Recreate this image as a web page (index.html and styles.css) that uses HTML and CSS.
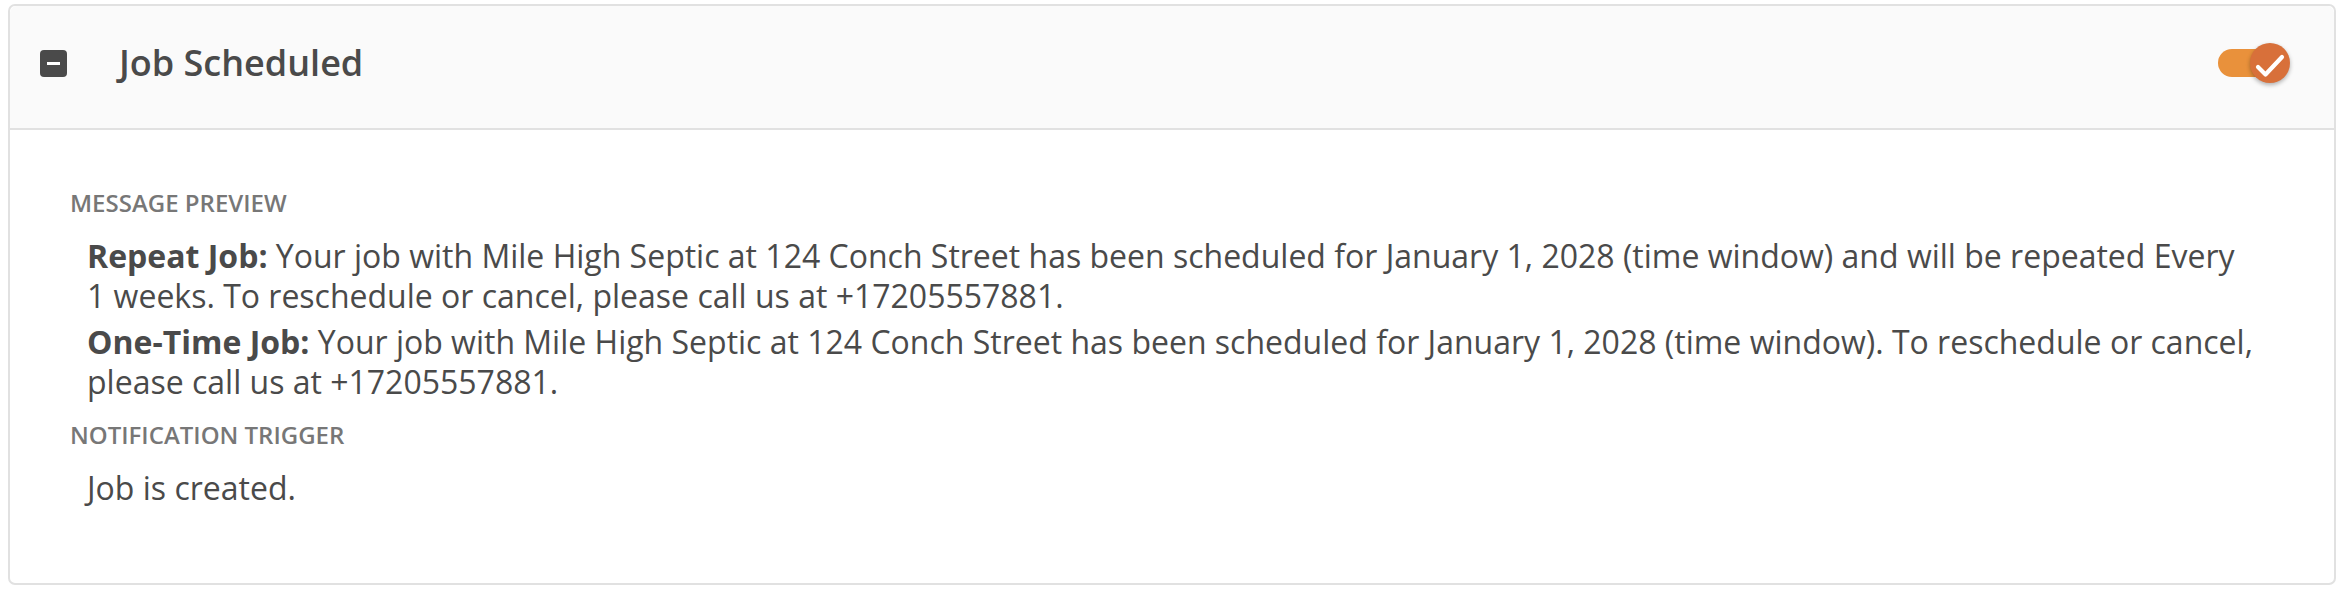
FILE: index.html
```html
<!DOCTYPE html>
<html lang="en">
<head>
  <meta charset="UTF-8">
  <title>Notifications - Job Scheduled</title>
  <link rel="stylesheet" href="styles.css">
</head>
<body>

  <div class="panel">
    <!-- Header -->
    <div class="panel-heading">
      <span class="collapse-icon"><span class="dash"></span></span>
      <h3 class="panel-title">Job Scheduled</h3>
      <span class="toggle on">
        <span class="track"></span>
        <span class="knob">
          <svg width="40" height="40" viewBox="0 0 40 40">
            <path d="M8 24 L15.5 31.5 L32 14" fill="none" stroke="#fff" stroke-width="4.2" stroke-linecap="round" stroke-linejoin="round"/>
          </svg>
        </span>
      </span>
    </div>

    <!-- Body -->
    <div class="panel-body">
      <div class="field-label">Message Preview</div>
      <div class="field-value">
        <p class="msg"><b>Repeat Job:</b> Your job with Mile High Septic at 124 Conch Street has been scheduled for January 1, 2028 (time window) and will be repeated Every 1 weeks. To reschedule or cancel, please call us at +17205557881.</p>
        <p class="msg"><b>One-Time Job:</b> Your job with Mile High Septic at 124 Conch Street has been scheduled for January 1, 2028 (time window). To reschedule or cancel, please call us at +17205557881.</p>
      </div>
      <div class="field-label">Notification Trigger</div>
      <div class="field-value">Job is created.</div>
    </div>
  </div>

</body>
</html>
```

FILE: styles.css
```css
body {
  margin: 0;
  padding: 4px 10px 0 8px;
  font-family: "Open Sans", Arial, sans-serif;
  color: #4a4a4a;
  background: #fff;
}

.panel {
  border: 2px solid #e1e1e1;
  border-radius: 7px;
  background: #fff;
}

.panel-heading {
  display: flex;
  align-items: center;
  height: 114px;
  padding: 0 44px 8px 30px;
  background: #fafafa;
  border-bottom: 2px solid #e1e1e1;
  border-radius: 7px 7px 0 0;
}

.collapse-icon {
  width: 27px;
  height: 27px;
  border-radius: 4px;
  background: #4a4a4a;
  display: flex;
  align-items: center;
  justify-content: center;
}

.collapse-icon .dash {
  width: 13px;
  height: 3px;
  background: #fff;
}

.panel-title {
  flex: 1;
  margin: 0 0 0 52px;
  font-size: 36px;
  line-height: 44px;
  font-weight: 600;
  color: #4a4a4a;
}

.toggle {
  position: relative;
  width: 72px;
  height: 40px;
}

.toggle .track {
  position: absolute;
  left: 0;
  top: 6px;
  width: 66px;
  height: 28px;
  border-radius: 14px;
  background: #e9913b;
}

.toggle .knob {
  position: absolute;
  right: 0;
  top: 0;
  width: 40px;
  height: 40px;
  border-radius: 50%;
  background: #d8703a;
  box-shadow: 0 2px 4px rgba(0,0,0,0.3);
}

.toggle .knob svg {
  display: block;
}

.panel-body {
  padding: 56px 80px 75px 60px;
}

.field-label {
  font-size: 24px;
  font-weight: 600;
  line-height: 34px;
  color: #777;
  text-transform: uppercase;
}

.field-value {
  margin: 16px 0 16px 17px;
  font-size: 32px;
  line-height: 40px;
}

.field-value:last-child {
  margin-bottom: 0;
}

.msg {
  margin: 0;
}

.msg + .msg {
  margin-top: 6px;
}

.msg b {
  font-weight: 700;
}
```
